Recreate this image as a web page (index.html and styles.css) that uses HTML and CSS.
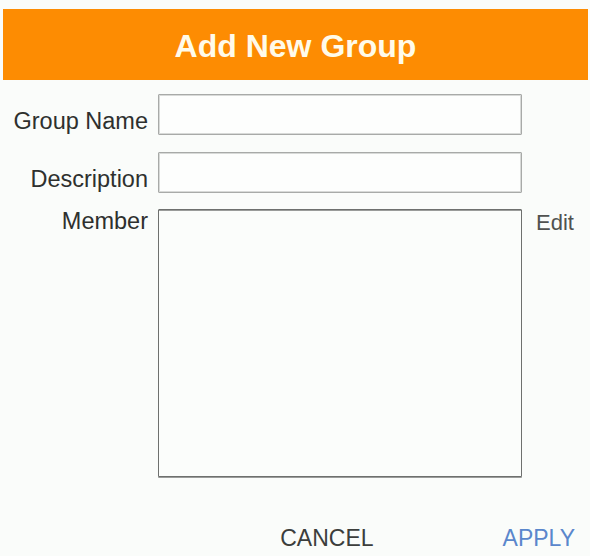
FILE: index.html
```html
<!DOCTYPE html>
<html lang="en">
<head>
<meta charset="utf-8">
<title>Add New Group</title>
<link rel="stylesheet" href="styles.css">
</head>
<body>
<div class="dialog">
  <header class="header"><h1 class="title">Add New Group</h1></header>
  <form class="form">
    <label class="label label-end" for="gname">Group Name</label>
    <input class="field" id="gname" type="text">
    <span></span>
    <label class="label label-end" for="gdesc">Description</label>
    <input class="field" id="gdesc" type="text">
    <span></span>
    <label class="label label-start" for="gmem">Member</label>
    <textarea class="members" id="gmem"></textarea>
    <a class="edit">Edit</a>
  </form>
  <div class="actions">
    <button class="btn btn-cancel" type="button">CANCEL</button>
    <button class="btn btn-apply" type="button">APPLY</button>
  </div>
</div>
</body>
</html>
```
FILE: styles.css
```css
html, body {
  margin: 0;
  padding: 0;
  background: #fafcfa;
}
body {
  font-family: "Liberation Sans", Arial, sans-serif;
  width: 590px;
  height: 556px;
  overflow: hidden;
}
.dialog {
  display: flex;
  flex-direction: column;
}
.header {
  margin: 9px 2px 0 3px;
  height: 71px;
  background: #fd8c02;
  display: flex;
  align-items: center;
  justify-content: center;
}
.title {
  margin: 0;
  font-size: 32px;
  font-weight: bold;
  color: #fffbea;
  line-height: 1;
  padding-top: 2px;
}
.form {
  margin-top: 14px;
  display: grid;
  grid-template-columns: 158px 364px auto;
  grid-template-rows: 41px 41px 268px;
  row-gap: 17px;
}
.form > :nth-child(n+7) {
  margin-top: -1px;
}
.label {
  font-size: 23.5px;
  line-height: 23.5px;
  color: #2e302e;
  text-align: right;
  padding-right: 10px;
}
.label-end {
  align-self: end;
  padding-bottom: 2px;
}
.label-start {
  align-self: start;
  padding-top: 1px;
}
.field {
  box-sizing: border-box;
  width: 364px;
  height: 41px;
  margin: 0;
  border: 1px solid #a8aaa8;
  box-shadow: inset 0 0 0 1px #d8dad8;
  background: #fdfefd;
  border-radius: 1px;
}
.members {
  box-sizing: border-box;
  width: 364px;
  height: 268px;
  margin: 0;
  resize: none;
  border: 1px solid #6e706e;
  box-shadow: inset 0 1px 0 #9a9c9a, 0 1px 0 #9a9c9a;
  background: #fbfdfb;
  border-radius: 1px;
}
.edit {
  align-self: start;
  padding: 3px 0 0 14px;
  font-size: 22px;
  line-height: 22px;
  color: #505250;
}
.actions {
  display: flex;
  justify-content: flex-end;
  align-items: baseline;
  gap: 129px;
  padding: 49px 15px 0 0;
}
.btn {
  background: none;
  border: 0;
  padding: 0;
  font-family: "Liberation Sans", Arial, sans-serif;
  font-size: 23px;
  line-height: 23px;
}
.btn-cancel {
  color: #3c3e3c;
}
.btn-apply {
  color: #5a87cc;
}
```
